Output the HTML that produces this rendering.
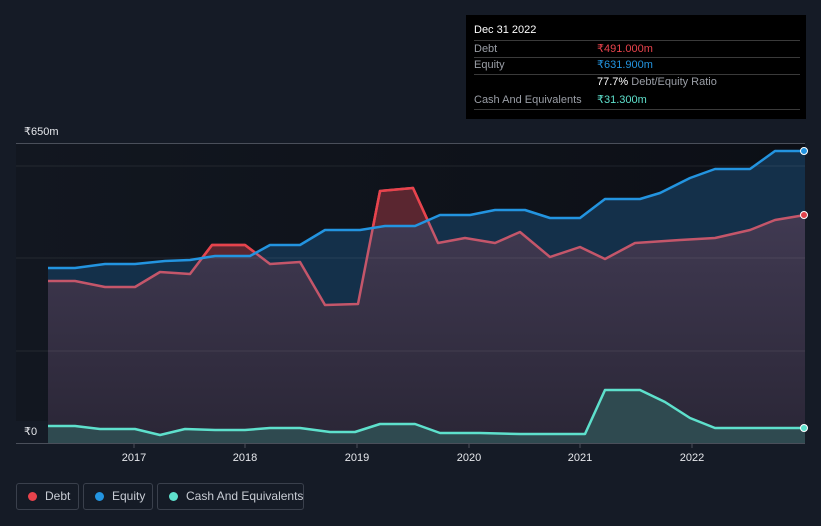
<!DOCTYPE html>
<html><head><meta charset="utf-8"><style>
body{margin:0;width:821px;height:526px;background:#151b26;font-family:"Liberation Sans",sans-serif;overflow:hidden;position:relative}
.tt{position:absolute;left:466px;top:15px;width:340px;height:104px;background:#000;color:#fff;font-size:11px}
.tt .r{position:absolute;left:8px;right:6px;height:17px;border-bottom:1px solid #3a3a3a;color:#9a9ea6}
.tt span.v{position:absolute;left:123px}
.leg{position:absolute;top:483px;height:27px;border:1px solid #3a404c;border-radius:3px;color:#c8ccd4;font-size:12px;line-height:25px;box-sizing:border-box;white-space:nowrap}
.leg i{position:absolute;left:11px;top:8px;width:9px;height:9px;border-radius:50%}
</style></head><body>
<svg width="821" height="526" style="position:absolute;left:0;top:0">
<defs>
<linearGradient id="bg" x1="0" y1="0" x2="1" y2="0"><stop offset="0" stop-color="#121720"/><stop offset="1" stop-color="#0c0f16"/></linearGradient>
<linearGradient id="pu" x1="0" y1="0" x2="0" y2="1"><stop offset="0" stop-color="#433c55"/><stop offset="1" stop-color="#2a2636"/></linearGradient>
<clipPath id="eqc"><path d="M48,268 L75,268 105,264 135,264 165,261 190,260 215,256 250,256 270,245 300,245 325,230 360,230 385,226 415,226 440,215 470,215 495,210 525,210 550,218 580,218 605,199 640,199 660,193 690,178 715,169 750,169 775,151 805,151 805,443 48,443Z"/></clipPath>
<clipPath id="abv"><path d="M48,268 L75,268 105,264 135,264 165,261 190,260 215,256 250,256 270,245 300,245 325,230 360,230 385,226 415,226 440,215 470,215 495,210 525,210 550,218 580,218 605,199 640,199 660,193 690,178 715,169 750,169 775,151 805,151 805,100 48,100Z"/></clipPath>
</defs>
<rect x="16" y="143" width="789" height="300" fill="url(#bg)"/>
<path d="M48,281 L75,281 105,287 135,287 160,272 190,274 212,245 245,245 270,264 300,262 325,305 358,304 380,191 413,188 438,243 465,238 495,243 520,232 550,257 580,247 605,259 635,243 680,240 715,238 750,230 775,220 805,215 805,443 48,443Z" fill="#5a2630"/>
<path d="M48,268 L75,268 105,264 135,264 165,261 190,260 215,256 250,256 270,245 300,245 325,230 360,230 385,226 415,226 440,215 470,215 495,210 525,210 550,218 580,218 605,199 640,199 660,193 690,178 715,169 750,169 775,151 805,151 805,443 48,443Z" fill="#14304a"/>
<path clip-path="url(#eqc)" d="M48,281 L75,281 105,287 135,287 160,272 190,274 212,245 245,245 270,264 300,262 325,305 358,304 380,191 413,188 438,243 465,238 495,243 520,232 550,257 580,247 605,259 635,243 680,240 715,238 750,230 775,220 805,215 805,443 48,443Z" fill="url(#pu)"/>
<g stroke="#ffffff" stroke-opacity="0.08"><line x1="16" x2="805" y1="166" y2="166"/><line x1="16" x2="805" y1="258" y2="258"/><line x1="16" x2="805" y1="351" y2="351"/></g>
<line x1="16" x2="805" y1="143.5" y2="143.5" stroke="#4a4f5a"/>
<path d="M48,426 L75,426 100,429 135,429 160,435 185,429 215,430 245,430 270,428 300,428 330,432 355,432 380,424 415,424 440,433 480,433 520,434 560,434 585,434 605,390 640,390 665,402 690,418 715,428 805,428 805,443 48,443Z" fill="#2f4a50"/>
<path d="M48,281 L75,281 105,287 135,287 160,272 190,274 212,245 245,245 270,264 300,262 325,305 358,304 380,191 413,188 438,243 465,238 495,243 520,232 550,257 580,247 605,259 635,243 680,240 715,238 750,230 775,220 805,215" fill="none" stroke="#c4566a" stroke-width="2.5" stroke-linejoin="round"/>
<path clip-path="url(#abv)" d="M48,281 L75,281 105,287 135,287 160,272 190,274 212,245 245,245 270,264 300,262 325,305 358,304 380,191 413,188 438,243 465,238 495,243 520,232 550,257 580,247 605,259 635,243 680,240 715,238 750,230 775,220 805,215" fill="none" stroke="#e8434c" stroke-width="2.5" stroke-linejoin="round"/>
<path d="M48,268 L75,268 105,264 135,264 165,261 190,260 215,256 250,256 270,245 300,245 325,230 360,230 385,226 415,226 440,215 470,215 495,210 525,210 550,218 580,218 605,199 640,199 660,193 690,178 715,169 750,169 775,151 805,151" fill="none" stroke="#2394e0" stroke-width="2.5" stroke-linejoin="round"/>
<path d="M48,426 L75,426 100,429 135,429 160,435 185,429 215,430 245,430 270,428 300,428 330,432 355,432 380,424 415,424 440,433 480,433 520,434 560,434 585,434 605,390 640,390 665,402 690,418 715,428 805,428" fill="none" stroke="#5ee0cc" stroke-width="2.5" stroke-linejoin="round"/>
<circle cx="804" cy="151" r="3.5" fill="#2394e0" stroke="#fff"/><circle cx="804" cy="215" r="3.5" fill="#e0434c" stroke="#fff"/><circle cx="804" cy="428" r="3.5" fill="#5ee0cc" stroke="#fff"/>
<line x1="16" x2="805" y1="443.5" y2="443.5" stroke="#4a4f5a"/>
<g stroke="#4a4f5a"><line x1="134" x2="134" y1="443" y2="448"/><line x1="245" x2="245" y1="443" y2="448"/><line x1="357" x2="357" y1="443" y2="448"/><line x1="469" x2="469" y1="443" y2="448"/><line x1="580" x2="580" y1="443" y2="448"/><line x1="692" x2="692" y1="443" y2="448"/></g>
<rect x="16" y="421" width="32" height="22" fill="#151b26"/>
<g fill="#e6e8ec" font-size="11" font-family="Liberation Sans" text-anchor="middle"><text x="134" y="461">2017</text><text x="245" y="461">2018</text><text x="357" y="461">2019</text><text x="469" y="461">2020</text><text x="580" y="461">2021</text><text x="692" y="461">2022</text></g>
<text x="24" y="135" fill="#e6e8ec" font-size="11" font-family="Liberation Sans">₹650m</text>
<text x="24" y="435" fill="#e6e8ec" font-size="11" font-family="Liberation Sans">₹0</text>
</svg>
<div class="tt">
<div style="position:absolute;left:8px;top:9px;font-size:11px">Dec 31 2022</div>
<div class="r" style="top:25px;border-top:1px solid #3a3a3a;height:16px;line-height:16px">Debt<span class="v" style="color:#e8434c">₹491.000m</span></div>
<div class="r" style="top:42px;line-height:16px">Equity<span class="v" style="color:#2394e0">₹631.900m</span></div>
<div style="position:absolute;left:131px;top:61px;color:#9a9ea6"><b style="color:#fff;font-weight:normal">77.7%</b> Debt/Equity Ratio</div>
<div class="r" style="top:77px;line-height:16px">Cash And Equivalents<span class="v" style="color:#5ee0cc">₹31.300m</span></div>
</div>
<div class="leg" style="left:16px;width:63px"><i style="background:#e8434c"></i><span style="position:absolute;left:28px">Debt</span></div>
<div class="leg" style="left:83px;width:70px"><i style="background:#2394e0"></i><span style="position:absolute;left:28px">Equity</span></div>
<div class="leg" style="left:157px;width:147px"><i style="background:#5ee0cc"></i><span style="position:absolute;left:28px">Cash And Equivalents</span></div>
</body></html>
